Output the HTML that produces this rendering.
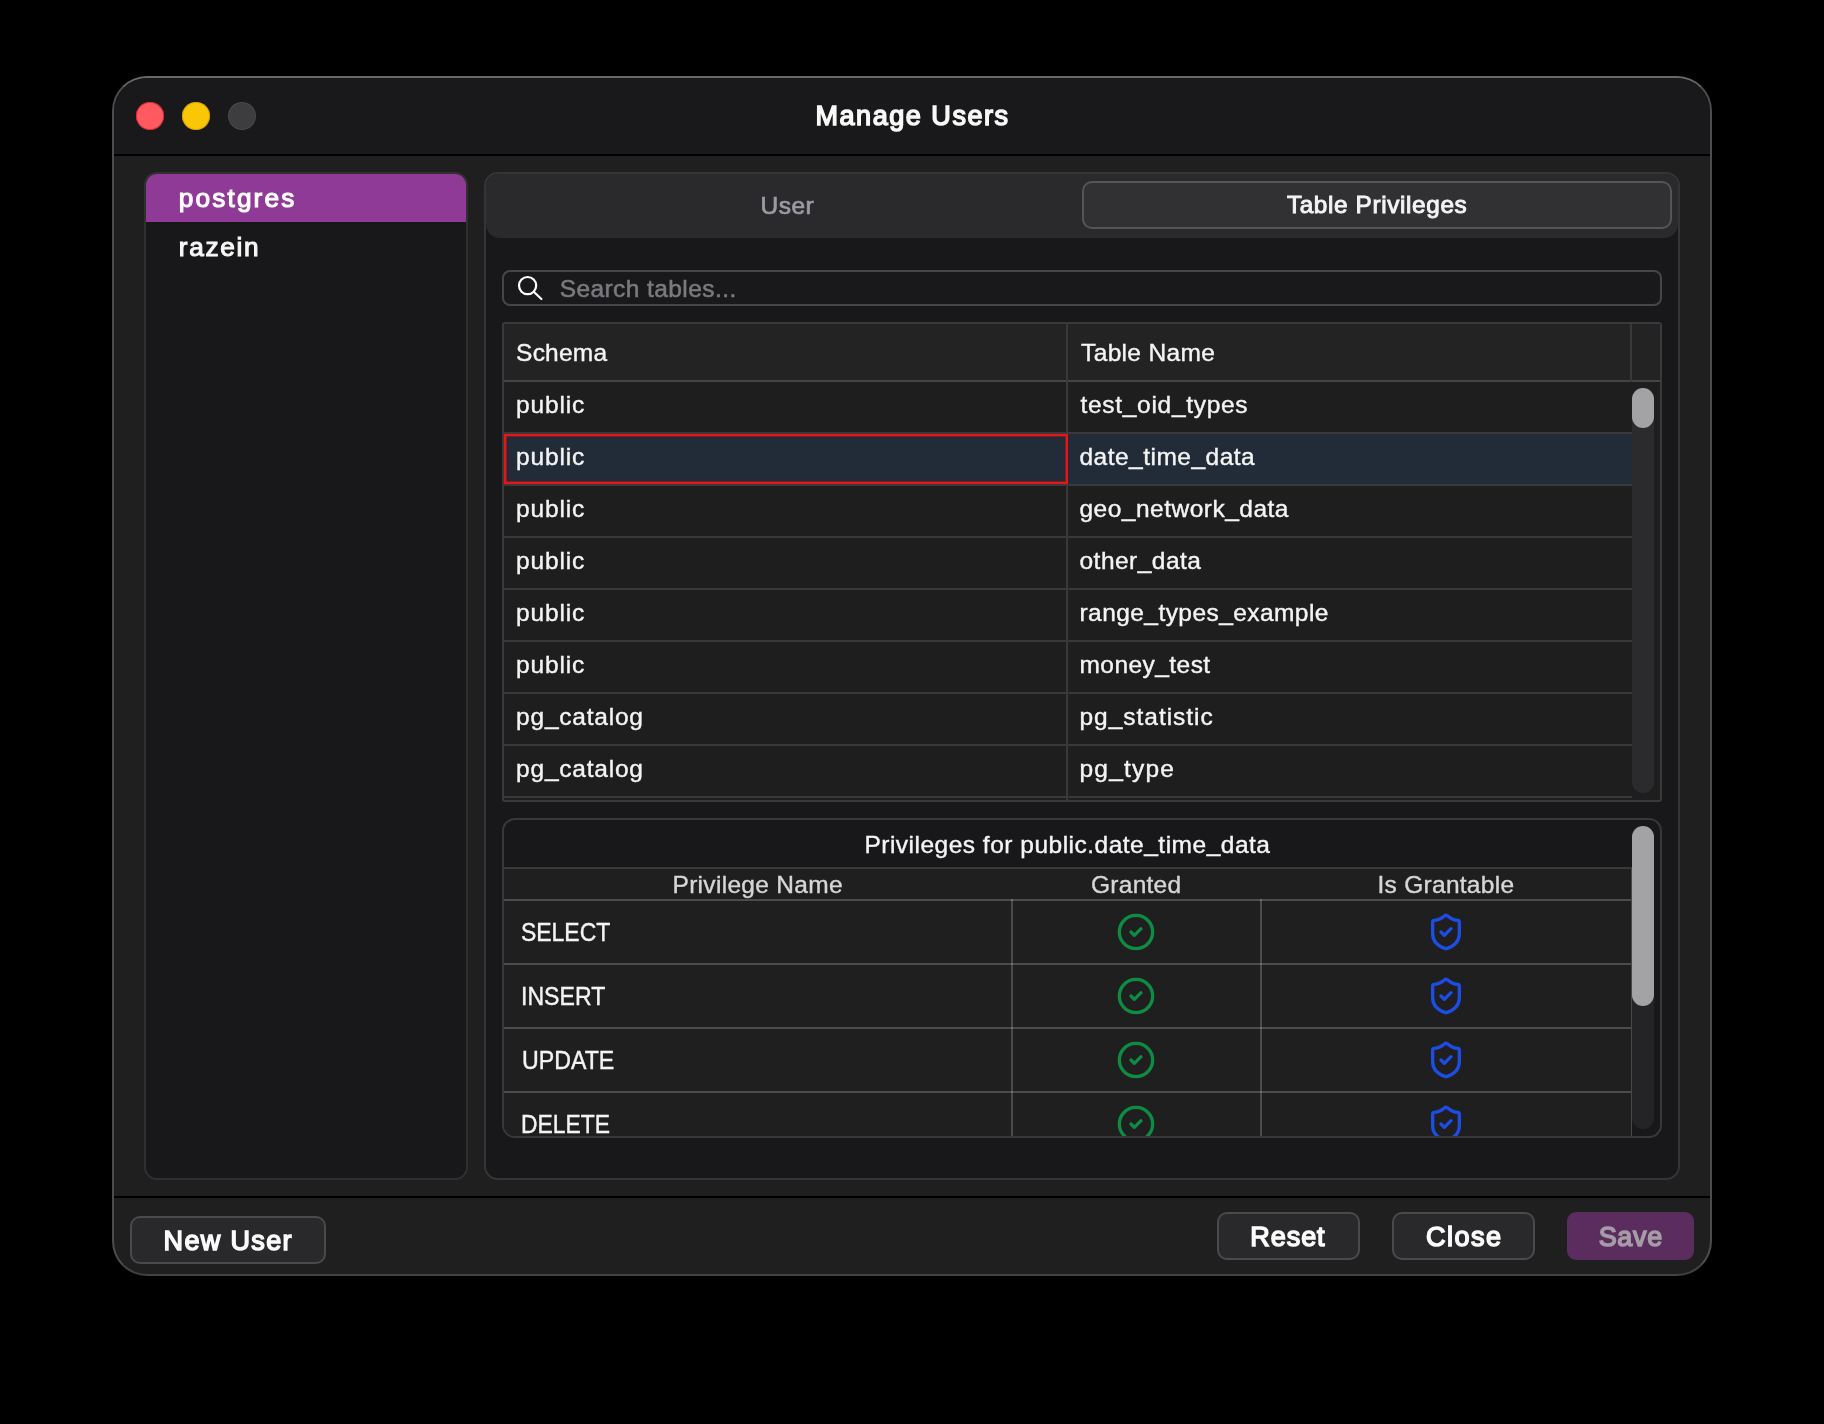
<!DOCTYPE html>
<html lang="en"><head><meta charset="utf-8"><title>Manage Users</title>
<style>
html,body{margin:0;padding:0;background:#000;}
body{width:1824px;height:1424px;position:relative;overflow:hidden;font-family:"Liberation Sans",sans-serif;}
.a{position:absolute;box-sizing:border-box;}
.t{position:absolute;-webkit-font-smoothing:antialiased;white-space:pre;line-height:40px;height:40px;font-family:"Liberation Sans",sans-serif;}
#win{left:112px;top:76px;width:1600px;height:1200px;border:2px solid #4c4c4e;border-top-color:#686869;border-bottom-color:#424244;border-radius:35px;background:#1f1f20;overflow:hidden;}
#titlebar{left:0;top:0;width:1596px;height:76px;background:#19191b;}
.hl{background:#000;left:0;width:1596px;height:2px;}
.dot{width:28px;height:28px;border-radius:50%;top:102px;}
#list{left:144px;top:172px;width:324px;height:1008px;border:2px solid #303033;border-radius:13px;background:#18181a;overflow:hidden;}
#sel{left:0;top:0;width:320px;height:48px;background:#903a98;}
#panel{left:484px;top:172px;width:1196px;height:1008px;border:2px solid #353538;border-radius:14px;background:#18181a;overflow:hidden;}
#tabbar{left:0;top:0;width:1192px;height:64px;background:#2a2a2c;border-radius:0 0 14px 14px;}
#tabact{left:1082px;top:181px;width:590px;height:48px;border:2px solid #555557;border-radius:10px;background:#313133;}
#search{left:502px;top:270px;width:1160px;height:36px;border:2px solid #464649;border-radius:8px;background:#19191b;}
#tbl{left:502px;top:322px;width:1160px;height:480px;border:2px solid #3a3a3c;border-radius:3px;background:#1e1e1f;overflow:hidden;}
#thead{left:0;top:0;width:1156px;height:56px;background:#232324;}
.rl{left:0;height:2px;background:#39393b;width:1128px;}
.vl{top:0;width:2px;background:#39393b;height:476px;}
#rowsel{left:0;top:110px;width:1128px;height:50px;background:#222c39;}
#cellsel{left:0px;top:110px;width:564px;height:50px;border:2px solid #e91416;box-shadow:inset 0 0 0 0.6px rgba(233,20,22,.75);}
.track{background:#2b2b2d;border-radius:11px;}
.thumb{background:#a3a3a5;border-radius:11px;}
#priv{left:502px;top:818px;width:1160px;height:320px;border:2px solid #38383a;border-radius:13px;background:#18181a;overflow:hidden;}
#pbody{left:0;top:49px;width:1128px;height:270px;background:#1f1f20;}
.pl{left:0;height:2px;background:rgba(255,255,255,.2);width:1128px;}
.pv{width:2px;background:rgba(255,255,255,.2);top:79px;height:242px;}
.btn{border:2px solid #4a4a4c;border-radius:10px;background:#29292b;}
#save{left:1567px;top:1212px;width:127px;height:48px;border-radius:9px;background:#5b2d5f;}
#txt{position:absolute;left:0;top:0;width:1824px;height:1424px;will-change:transform;}
.u{position:relative;top:-1.7px;}

</style></head>
<body>
<div id="win" class="a">
  <div id="titlebar" class="a"></div>
  <div class="a hl" style="top:76px"></div>
  <div class="a hl" style="top:1118px"></div>
  <div class="a dot" style="left:22px;top:24px;background:#fe5a5f;box-shadow:inset 0 0 0 1px rgba(205,20,45,.65);"></div>
  <div class="a dot" style="left:68px;top:24px;background:#fbc704;box-shadow:inset 0 0 0 1px rgba(190,140,0,.55);"></div>
  <div class="a dot" style="left:114px;top:24px;background:#3d3d3f;box-shadow:inset 0 0 0 1px rgba(255,255,255,.07);"></div>
</div>
<div id="list" class="a"><div id="sel" class="a"></div></div>
<div id="panel" class="a"><div id="tabbar" class="a"></div></div>
<div id="tabact" class="a"></div>
<div id="search" class="a"></div>
<svg class="a" style="left:514px;top:272px" width="32" height="32" viewBox="0 0 32 32"><circle cx="13.6" cy="13.6" r="8.6" fill="none" stroke="#fff" stroke-width="2.2"/><path d="M20 20 L27.4 27" stroke="#fff" stroke-width="2.2" stroke-linecap="round"/></svg>
<div id="tbl" class="a">
  <div id="thead" class="a"></div>
  <div id="rowsel" class="a"></div>
  <div class="a rl" style="top:56px;width:1156px;background:#454547"></div>
  <div class="a rl" style="top:108px"></div><div class="a rl" style="top:160px"></div><div class="a rl" style="top:212px"></div>
  <div class="a rl" style="top:264px"></div><div class="a rl" style="top:316px"></div><div class="a rl" style="top:368px"></div>
  <div class="a rl" style="top:420px"></div><div class="a rl" style="top:472px"></div>
  <div class="a vl" style="left:562px"></div><div class="a vl" style="left:1126px;height:58px"></div>
  <div id="cellsel" class="a"></div>
  <div class="a track" style="left:1128px;top:64px;width:22px;height:405px"></div>
  <div class="a thumb" style="left:1128px;top:64px;width:22px;height:40px"></div>
</div>
<div id="priv" class="a">
  <div id="pbody" class="a"></div>
  <div class="a pl" style="top:47px;background:#3a3a3c"></div>
  <div class="a pl" style="top:79px"></div><div class="a pl" style="top:143px"></div><div class="a pl" style="top:207px"></div><div class="a pl" style="top:271px"></div>
  <div class="a pv" style="left:507px"></div><div class="a pv" style="left:756px"></div>
  <div class="a track" style="left:1128px;top:6px;width:22px;height:303px;background:#242426"></div><div class="a" style="left:1127px;top:49px;width:1px;height:270px;background:#48484a"></div>
  <div class="a thumb" style="left:1128px;top:6px;width:22px;height:180px"></div>
  <svg class="a" style="left:612px;top:92px" width="40" height="40" viewBox="0 0 24 24" fill="none" stroke="#0f8b42" stroke-width="2" stroke-linecap="round" stroke-linejoin="round"><circle cx="12" cy="12" r="10"/><path d="m9 12 2 2 4-4"/></svg>
<svg class="a" style="left:922.25px;top:92px" width="40" height="40" viewBox="0 0 24 24" fill="none" stroke="#1d4de2" stroke-width="2" stroke-linecap="round" stroke-linejoin="round"><path d="M20 13c0 5-3.5 7.5-7.66 8.95a1 1 0 0 1-.67-.01C7.5 20.5 4 18 4 13V6a1 1 0 0 1 1-1c2 0 4.5-1.2 6.24-2.72a1.17 1.17 0 0 1 1.52 0C14.51 3.81 17 5 19 5a1 1 0 0 1 1 1z"/><path d="m9 12 2 2 4-4"/></svg>
<svg class="a" style="left:612px;top:156px" width="40" height="40" viewBox="0 0 24 24" fill="none" stroke="#0f8b42" stroke-width="2" stroke-linecap="round" stroke-linejoin="round"><circle cx="12" cy="12" r="10"/><path d="m9 12 2 2 4-4"/></svg>
<svg class="a" style="left:922.25px;top:156px" width="40" height="40" viewBox="0 0 24 24" fill="none" stroke="#1d4de2" stroke-width="2" stroke-linecap="round" stroke-linejoin="round"><path d="M20 13c0 5-3.5 7.5-7.66 8.95a1 1 0 0 1-.67-.01C7.5 20.5 4 18 4 13V6a1 1 0 0 1 1-1c2 0 4.5-1.2 6.24-2.72a1.17 1.17 0 0 1 1.52 0C14.51 3.81 17 5 19 5a1 1 0 0 1 1 1z"/><path d="m9 12 2 2 4-4"/></svg>
<svg class="a" style="left:612px;top:220px" width="40" height="40" viewBox="0 0 24 24" fill="none" stroke="#0f8b42" stroke-width="2" stroke-linecap="round" stroke-linejoin="round"><circle cx="12" cy="12" r="10"/><path d="m9 12 2 2 4-4"/></svg>
<svg class="a" style="left:922.25px;top:220px" width="40" height="40" viewBox="0 0 24 24" fill="none" stroke="#1d4de2" stroke-width="2" stroke-linecap="round" stroke-linejoin="round"><path d="M20 13c0 5-3.5 7.5-7.66 8.95a1 1 0 0 1-.67-.01C7.5 20.5 4 18 4 13V6a1 1 0 0 1 1-1c2 0 4.5-1.2 6.24-2.72a1.17 1.17 0 0 1 1.52 0C14.51 3.81 17 5 19 5a1 1 0 0 1 1 1z"/><path d="m9 12 2 2 4-4"/></svg>
<svg class="a" style="left:612px;top:284px" width="40" height="40" viewBox="0 0 24 24" fill="none" stroke="#0f8b42" stroke-width="2" stroke-linecap="round" stroke-linejoin="round"><circle cx="12" cy="12" r="10"/><path d="m9 12 2 2 4-4"/></svg>
<svg class="a" style="left:922.25px;top:284px" width="40" height="40" viewBox="0 0 24 24" fill="none" stroke="#1d4de2" stroke-width="2" stroke-linecap="round" stroke-linejoin="round"><path d="M20 13c0 5-3.5 7.5-7.66 8.95a1 1 0 0 1-.67-.01C7.5 20.5 4 18 4 13V6a1 1 0 0 1 1-1c2 0 4.5-1.2 6.24-2.72a1.17 1.17 0 0 1 1.52 0C14.51 3.81 17 5 19 5a1 1 0 0 1 1 1z"/><path d="m9 12 2 2 4-4"/></svg>
</div>
<div class="a btn" style="left:130px;top:1216px;width:196px;height:48px"></div>
<div class="a btn" style="left:1217px;top:1212px;width:143px;height:48px"></div>
<div class="a btn" style="left:1392px;top:1212px;width:143px;height:48px"></div>
<div id="save" class="a"></div>
<div id="txt">
<div class="t" style="left:815.50px;top:95.74px;font-size:27.0px;color:#f8f8f8;letter-spacing:1.538px;-webkit-text-stroke:1.5px #f8f8f8">Manage Users</div>
<div class="t" style="left:178.80px;top:178.42px;font-size:26.2px;color:#ffffff;letter-spacing:2.150px;-webkit-text-stroke:1.1px #ffffff">postgres</div>
<div class="t" style="left:178.80px;top:227.22px;font-size:26.2px;color:#f6f6f6;letter-spacing:1.688px;-webkit-text-stroke:1.1px #f6f6f6">razein</div>
<div class="t" style="left:760.50px;top:185.51px;font-size:24.5px;color:#9b9ba3;letter-spacing:0.510px;-webkit-text-stroke:0.7px #9b9ba3">User</div>
<div class="t" style="left:1286.90px;top:185.28px;font-size:24.3px;color:#f4f4f4;letter-spacing:0.646px;-webkit-text-stroke:0.95px #f4f4f4">Table Privileges</div>
<div class="t" style="left:559.70px;top:268.51px;font-size:24.5px;color:#7a7a7e;letter-spacing:0.418px;-webkit-text-stroke:0.55px #7a7a7e">Search tables...</div>
<div class="t" style="left:516.10px;top:332.61px;font-size:24.5px;color:#f4f4f4;letter-spacing:0.210px;-webkit-text-stroke:0.4px #f4f4f4">Schema</div>
<div class="t" style="left:1081.10px;top:332.61px;font-size:24.5px;color:#f4f4f4;letter-spacing:0.333px;-webkit-text-stroke:0.4px #f4f4f4">Table Name</div>
<div class="t" style="left:516.10px;top:385.41px;font-size:24.5px;color:#f4f4f4;letter-spacing:0.847px;-webkit-text-stroke:0.4px #f4f4f4">public</div>
<div class="t" style="left:1080.50px;top:385.41px;font-size:24.5px;color:#f4f4f4;letter-spacing:0.697px;-webkit-text-stroke:0.4px #f4f4f4">test<span class="u">_</span>oid<span class="u">_</span>types</div>
<div class="t" style="left:516.10px;top:437.41px;font-size:24.5px;color:#f4f4f4;letter-spacing:0.847px;-webkit-text-stroke:0.4px #f4f4f4">public</div>
<div class="t" style="left:1079.50px;top:437.41px;font-size:24.5px;color:#f4f4f4;letter-spacing:0.479px;-webkit-text-stroke:0.4px #f4f4f4">date<span class="u">_</span>time<span class="u">_</span>data</div>
<div class="t" style="left:516.10px;top:489.41px;font-size:24.5px;color:#f4f4f4;letter-spacing:0.847px;-webkit-text-stroke:0.4px #f4f4f4">public</div>
<div class="t" style="left:1079.50px;top:489.41px;font-size:24.5px;color:#f4f4f4;letter-spacing:0.488px;-webkit-text-stroke:0.4px #f4f4f4">geo<span class="u">_</span>network<span class="u">_</span>data</div>
<div class="t" style="left:516.10px;top:541.41px;font-size:24.5px;color:#f4f4f4;letter-spacing:0.847px;-webkit-text-stroke:0.4px #f4f4f4">public</div>
<div class="t" style="left:1079.50px;top:541.41px;font-size:24.5px;color:#f4f4f4;letter-spacing:0.475px;-webkit-text-stroke:0.4px #f4f4f4">other<span class="u">_</span>data</div>
<div class="t" style="left:516.10px;top:593.41px;font-size:24.5px;color:#f4f4f4;letter-spacing:0.847px;-webkit-text-stroke:0.4px #f4f4f4">public</div>
<div class="t" style="left:1079.50px;top:593.41px;font-size:24.5px;color:#f4f4f4;letter-spacing:0.436px;-webkit-text-stroke:0.4px #f4f4f4">range<span class="u">_</span>types<span class="u">_</span>example</div>
<div class="t" style="left:516.10px;top:645.41px;font-size:24.5px;color:#f4f4f4;letter-spacing:0.847px;-webkit-text-stroke:0.4px #f4f4f4">public</div>
<div class="t" style="left:1079.50px;top:645.41px;font-size:24.5px;color:#f4f4f4;letter-spacing:0.440px;-webkit-text-stroke:0.4px #f4f4f4">money<span class="u">_</span>test</div>
<div class="t" style="left:516.10px;top:697.41px;font-size:24.5px;color:#f4f4f4;letter-spacing:0.772px;-webkit-text-stroke:0.4px #f4f4f4">pg<span class="u">_</span>catalog</div>
<div class="t" style="left:1079.50px;top:697.41px;font-size:24.5px;color:#f4f4f4;letter-spacing:0.972px;-webkit-text-stroke:0.4px #f4f4f4">pg<span class="u">_</span>statistic</div>
<div class="t" style="left:516.10px;top:749.41px;font-size:24.5px;color:#f4f4f4;letter-spacing:0.772px;-webkit-text-stroke:0.4px #f4f4f4">pg<span class="u">_</span>catalog</div>
<div class="t" style="left:1079.50px;top:749.41px;font-size:24.5px;color:#f4f4f4;letter-spacing:1.190px;-webkit-text-stroke:0.4px #f4f4f4">pg<span class="u">_</span>type</div>
<div class="t" style="left:864.40px;top:824.71px;font-size:24.5px;color:#f4f4f4;letter-spacing:0.497px;-webkit-text-stroke:0.4px #f4f4f4">Privileges for public.date<span class="u">_</span>time<span class="u">_</span>data</div>
<div class="t" style="left:672.50px;top:864.51px;font-size:24.5px;color:#d6d6d6;letter-spacing:0.301px;-webkit-text-stroke:0.4px #d6d6d6">Privilege Name</div>
<div class="t" style="left:1091.00px;top:864.51px;font-size:24.5px;color:#d6d6d6;letter-spacing:0.267px;-webkit-text-stroke:0.4px #d6d6d6">Granted</div>
<div class="t" style="left:1377.50px;top:864.51px;font-size:24.5px;color:#d6d6d6;letter-spacing:0.279px;-webkit-text-stroke:0.4px #d6d6d6">Is Grantable</div>
<div class="t" style="left:520.98px;top:912.43px;font-size:25px;color:#f4f4f4;letter-spacing:0.000px;transform:scaleX(0.9179);transform-origin:0 0;-webkit-text-stroke:0.4px #f4f4f4">SELECT</div>
<div class="t" style="left:520.65px;top:976.43px;font-size:25px;color:#f4f4f4;letter-spacing:0.000px;transform:scaleX(0.9241);transform-origin:0 0;-webkit-text-stroke:0.4px #f4f4f4">INSERT</div>
<div class="t" style="left:521.57px;top:1040.43px;font-size:25px;color:#f4f4f4;letter-spacing:0.000px;transform:scaleX(0.9267);transform-origin:0 0;-webkit-text-stroke:0.4px #f4f4f4">UPDATE</div>
<div class="t" style="left:520.67px;top:1104.43px;font-size:25px;color:#f4f4f4;letter-spacing:0.000px;transform:scaleX(0.9146);transform-origin:0 0;-webkit-text-stroke:0.4px #f4f4f4">DELETE</div>
<div class="t" style="left:163.60px;top:1220.54px;font-size:27.0px;color:#fcfcfc;letter-spacing:1.339px;-webkit-text-stroke:1.5px #fcfcfc">New User</div>
<div class="t" style="left:1250.30px;top:1216.84px;font-size:27.0px;color:#fcfcfc;letter-spacing:0.942px;-webkit-text-stroke:1.5px #fcfcfc">Reset</div>
<div class="t" style="left:1426.00px;top:1216.84px;font-size:27.0px;color:#fcfcfc;letter-spacing:1.497px;-webkit-text-stroke:1.5px #fcfcfc">Close</div>
<div class="t" style="left:1598.70px;top:1216.84px;font-size:27.0px;color:#a69ca7;letter-spacing:0.658px;-webkit-text-stroke:1.5px #a69ca7">Save</div>
</div>

</body></html>
